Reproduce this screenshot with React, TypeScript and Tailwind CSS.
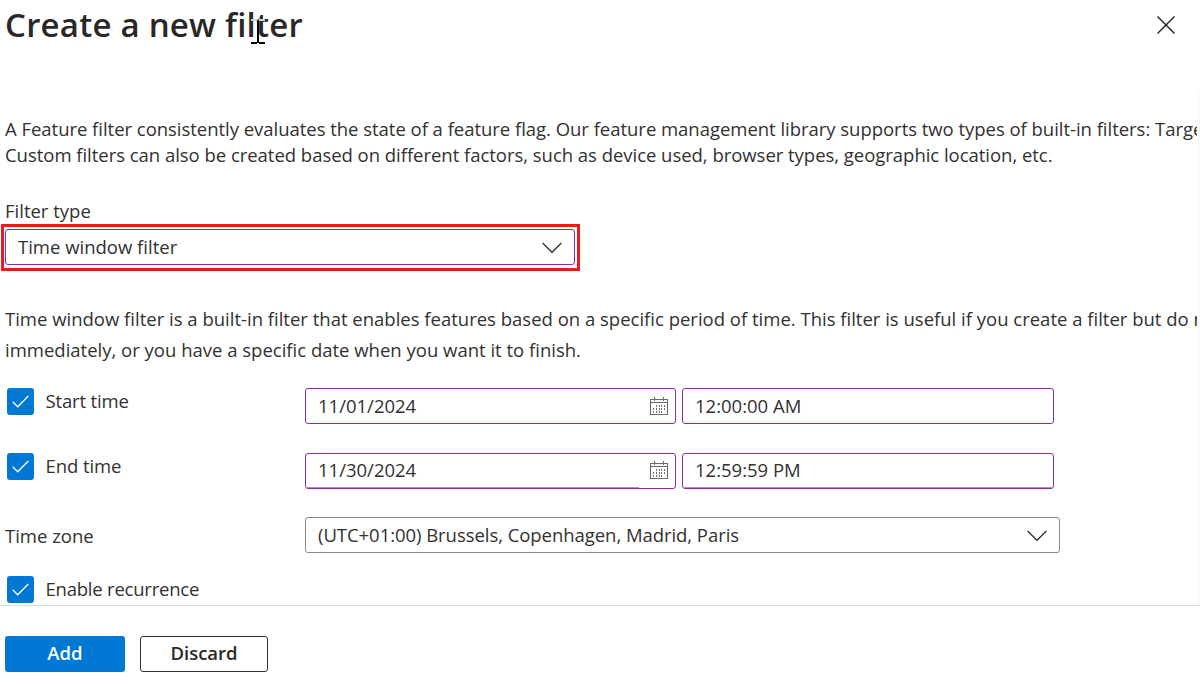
import React from 'react';

function Chevron() {
  return (
    <svg className="mt-px h-3 w-5 shrink-0" viewBox="0 0 20 12" fill="none" stroke="#323130" strokeWidth="1.3">
      <path d="M0.6 1 L10 10.3 L19.4 1" />
    </svg>
  );
}

function Calendar({ className = '' }: { className?: string }) {
  return (
    <svg className={`mr-[7px] h-[18px] w-[18px] shrink-0 ${className}`} viewBox="0 0 18 18" fill="none" stroke="#6e6c6a" shapeRendering="crispEdges">
      <path d="M0.5 2.5H17.5V17.5H0.5Z M0.5 5.5H17.5 M4.5 0V4 M13.5 0V4" />
      <path d="M6.5 8V16 M9.5 8V16 M11.5 8V16" strokeDasharray="2 1" />
      <path d="M3.5 11V16 M14.5 8V13" strokeDasharray="2 1" />
    </svg>
  );
}

function Check({ label, tracking }: { label: string; tracking: string }) {
  return (
    <label className="flex h-[27px] items-center gap-[11.5px] pl-[7px]">
      <span className="flex size-[27px] shrink-0 items-center justify-center rounded-[3px] bg-[#0078d4]">
        <svg className="size-[17px]" viewBox="0 0 17 17" fill="none" stroke="white" strokeWidth="1.3">
          <path d="M0.7 8.8 L5.7 13.8 L16.3 3" />
        </svg>
      </span>
      <span className={`pb-0.5 whitespace-nowrap ${tracking}`}>{label}</span>
    </label>
  );
}

interface FieldProps {
  value: string;
  className: string;
  textClass?: string;
  icon?: React.ReactNode;
}

function Field({ value, className, textClass = '', icon }: FieldProps) {
  return (
    <div className={`flex h-9 shrink-0 items-center justify-between rounded-[3px] border ${className}`}>
      <span className={`flex h-full items-center pl-3 whitespace-nowrap ${textClass}`}>{value}</span>
      {icon}
    </div>
  );
}

export default function App() {
  return (
    <div className="flex h-[685px] w-[1200px] flex-col overflow-hidden bg-white font-['Open_Sans','Noto_Sans',sans-serif] text-[18.5px] leading-[26px] text-[#323130]">
      <header className="flex h-[90px] shrink-0 items-start justify-between pr-[25px] pl-[5px]">
        <h1 className="relative mt-1 text-[33px] leading-[42px] font-semibold tracking-[0.22px] whitespace-nowrap text-[#292827]">
          Create a new filter
          <svg className="absolute top-[15px] left-[246px] h-[26px] w-[15px]" viewBox="0 0 15 26" fill="none" strokeWidth="2" shapeRendering="crispEdges">
            <path d="M0 1H6 M8 1H14" stroke="#d6d6d6" />
            <path d="M7 2V24 M0 24H6 M8 24H14" stroke="#000" />
          </svg>
        </h1>
        <svg className="mt-4 size-[18px]" viewBox="0 0 18 18" fill="none" stroke="#201f1e" strokeWidth="1.4">
          <path d="M0.5 0.5 L17.5 17.5 M17.5 0.5 L0.5 17.5" />
        </svg>
      </header>
      <div className="flex h-[515px] shrink-0">
        <main className="flex w-[1197px] flex-col overflow-hidden pt-[26px]">
          <div className="pl-[5px] tracking-[-0.03px] whitespace-nowrap">
            <p>A Feature filter consistently evaluates the state of a feature flag. Our feature management library supports two types of built-in filters: Targeting filter</p>
            <p>Custom filters can also be created based on different factors, such as device used, browser types, geographic location, etc.</p>
          </div>
          <div className="mt-[30px] h-[26px] pl-[5px]">Filter type</div>
          <div className="ml-px w-[579px] border-[3px] border-[#e81b1f] px-px pt-0.5 pb-[3px]">
            <Field value="Time window filter" className="w-[570px] border-[#8a2da5] pr-3" icon={<Chevron />} />
          </div>
          <div className="mt-8 pl-[5px] leading-[31px] whitespace-nowrap">
            <p>Time window filter is a built-in filter that enables features based on a specific period of time. This filter is useful if you create a filter but do not want it</p>
            <p>immediately, or you have a specific date when you want it to finish.</p>
          </div>
          <div className="mt-[23px] flex items-start">
            <div className="w-[305px] shrink-0"><Check label="Start time" tracking="tracking-[-0.15px]" /></div>
            <div className="flex gap-1.5">
              <Field value="11/01/2024" className="w-[371px] border-[#8a2da5]" icon={<Calendar />} />
              <Field value="12:00:00 AM" className="w-[372px] border-[#8a2da5]" />
            </div>
          </div>
          <div className="mt-[29px] flex items-start">
            <div className="w-[305px] shrink-0"><Check label="End time" tracking="tracking-[-0.08px]" /></div>
            <div className="flex gap-1.5">
              <Field value="11/30/2024" className="w-[371px] border-[#8a2da5]" textClass="w-[333px] pb-px border-b border-[#a09aa6]" icon={<Calendar className="mb-0.5" />} />
              <Field value="12:59:59 PM" className="w-[372px] border-[#8a2da5]" textClass="w-full pb-px border-b border-[#a09aa6]" />
            </div>
          </div>
          <div className="mt-7 flex items-center">
            <div className="w-[305px] shrink-0 pt-0.5 pl-[5px]">Time zone</div>
            <Field value="(UTC+01:00) Brussels, Copenhagen, Madrid, Paris" className="w-[755px] border-[#8a8886] pr-3" textClass="tracking-[-0.05px]" icon={<Chevron />} />
          </div>
          <div className="mt-[23px]"><Check label="Enable recurrence" tracking="tracking-[-0.22px]" /></div>
        </main>
        <div className="w-[3px] bg-[#fafafa]" />
      </div>
      <footer className="flex h-20 shrink-0 items-start gap-[15px] border-t border-[#d9d9d9] pt-[30px] pl-[5px] font-semibold">
        <button className="h-9 w-[120px] rounded-[3px] bg-[#0078d4] pb-0.5 text-white">Add</button>
        <button className="h-9 w-32 rounded-[3px] border border-[#323130] pb-0.5 text-[#292827]">Discard</button>
      </footer>
    </div>
  );
}
